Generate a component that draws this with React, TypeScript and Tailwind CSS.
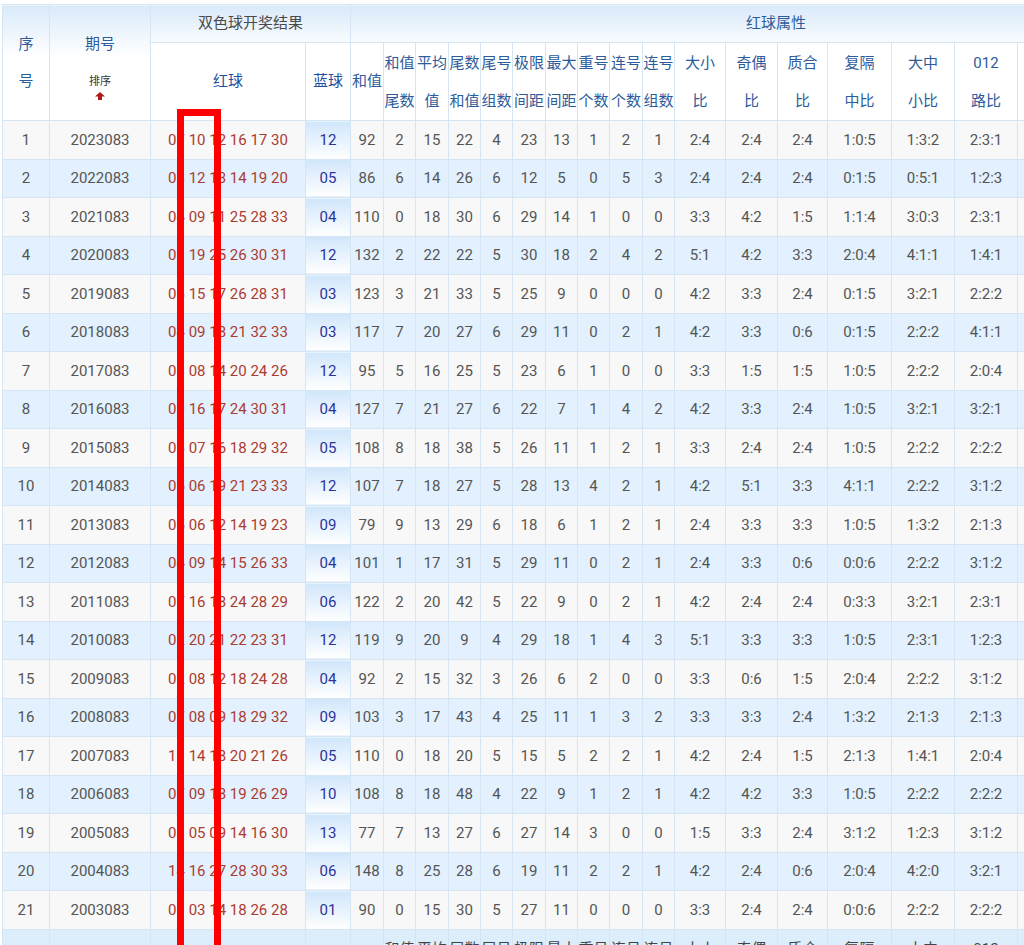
import React from "react";

// 双色球 历史同期 红球属性表
const draws = [
  { q: "2023083", red: "07 10 12 16 17 30", blue: "12", s: [92, 2, 15, 22, 4, 23, 13, 1, 2, 1], r: ["2:4", "2:4", "2:4", "1:0:5", "1:3:2", "2:3:1"] },
  { q: "2022083", red: "08 12 13 14 19 20", blue: "05", s: [86, 6, 14, 26, 6, 12, 5, 0, 5, 3], r: ["2:4", "2:4", "2:4", "0:1:5", "0:5:1", "1:2:3"] },
  { q: "2021083", red: "04 09 11 25 28 33", blue: "04", s: [110, 0, 18, 30, 6, 29, 14, 1, 0, 0], r: ["3:3", "4:2", "1:5", "1:1:4", "3:0:3", "2:3:1"] },
  { q: "2020083", red: "01 19 25 26 30 31", blue: "12", s: [132, 2, 22, 22, 5, 30, 18, 2, 4, 2], r: ["5:1", "4:2", "3:3", "2:0:4", "4:1:1", "1:4:1"] },
  { q: "2019083", red: "06 15 17 26 28 31", blue: "03", s: [123, 3, 21, 33, 5, 25, 9, 0, 0, 0], r: ["4:2", "3:3", "2:4", "0:1:5", "3:2:1", "2:2:2"] },
  { q: "2018083", red: "04 09 18 21 32 33", blue: "03", s: [117, 7, 20, 27, 6, 29, 11, 0, 2, 1], r: ["4:2", "3:3", "0:6", "0:1:5", "2:2:2", "4:1:1"] },
  { q: "2017083", red: "03 08 14 20 24 26", blue: "12", s: [95, 5, 16, 25, 5, 23, 6, 1, 0, 0], r: ["3:3", "1:5", "1:5", "1:0:5", "2:2:2", "2:0:4"] },
  { q: "2016083", red: "09 16 17 24 30 31", blue: "04", s: [127, 7, 21, 27, 6, 22, 7, 1, 4, 2], r: ["4:2", "3:3", "2:4", "1:0:5", "3:2:1", "3:2:1"] },
  { q: "2015083", red: "06 07 16 18 29 32", blue: "05", s: [108, 8, 18, 38, 5, 26, 11, 1, 2, 1], r: ["3:3", "2:4", "2:4", "1:0:5", "2:2:2", "2:2:2"] },
  { q: "2014083", red: "05 06 19 21 23 33", blue: "12", s: [107, 7, 18, 27, 5, 28, 13, 4, 2, 1], r: ["4:2", "5:1", "3:3", "4:1:1", "2:2:2", "3:1:2"] },
  { q: "2013083", red: "05 06 12 14 19 23", blue: "09", s: [79, 9, 13, 29, 6, 18, 6, 1, 2, 1], r: ["2:4", "3:3", "3:3", "1:0:5", "1:3:2", "2:1:3"] },
  { q: "2012083", red: "04 09 14 15 26 33", blue: "04", s: [101, 1, 17, 31, 5, 29, 11, 0, 2, 1], r: ["2:4", "3:3", "0:6", "0:0:6", "2:2:2", "3:1:2"] },
  { q: "2011083", red: "07 16 18 24 28 29", blue: "06", s: [122, 2, 20, 42, 5, 22, 9, 0, 2, 1], r: ["4:2", "2:4", "2:4", "0:3:3", "3:2:1", "2:3:1"] },
  { q: "2010083", red: "02 20 21 22 23 31", blue: "12", s: [119, 9, 20, 9, 4, 29, 18, 1, 4, 3], r: ["5:1", "3:3", "3:3", "1:0:5", "2:3:1", "1:2:3"] },
  { q: "2009083", red: "02 08 12 18 24 28", blue: "04", s: [92, 2, 15, 32, 3, 26, 6, 2, 0, 0], r: ["3:3", "0:6", "1:5", "2:0:4", "2:2:2", "3:1:2"] },
  { q: "2008083", red: "07 08 09 18 29 32", blue: "09", s: [103, 3, 17, 43, 4, 25, 11, 1, 3, 2], r: ["3:3", "3:3", "2:4", "1:3:2", "2:1:3", "2:1:3"] },
  { q: "2007083", red: "11 14 18 20 21 26", blue: "05", s: [110, 0, 18, 20, 5, 15, 5, 2, 2, 1], r: ["4:2", "2:4", "1:5", "2:1:3", "1:4:1", "2:0:4"] },
  { q: "2006083", red: "07 09 18 19 26 29", blue: "10", s: [108, 8, 18, 48, 4, 22, 9, 1, 2, 1], r: ["4:2", "4:2", "3:3", "1:0:5", "2:2:2", "2:2:2"] },
  { q: "2005083", red: "03 05 09 14 16 30", blue: "13", s: [77, 7, 13, 27, 6, 27, 14, 3, 0, 0], r: ["1:5", "3:3", "2:4", "3:1:2", "1:2:3", "3:1:2"] },
  { q: "2004083", red: "14 16 27 28 30 33", blue: "06", s: [148, 8, 25, 28, 6, 19, 11, 2, 2, 1], r: ["4:2", "2:4", "0:6", "2:0:4", "4:2:0", "3:2:1"] },
  { q: "2003083", red: "01 03 14 18 26 28", blue: "01", s: [90, 0, 15, 30, 5, 27, 11, 0, 0, 0], r: ["3:3", "2:4", "2:4", "0:0:6", "2:2:2", "2:2:2"] },
];

const statHeads: [string, string][] = [
  ["和值", "尾数"],
  ["平均", "值"],
  ["尾数", "和值"],
  ["尾号", "组数"],
  ["极限", "间距"],
  ["最大", "间距"],
  ["重号", "个数"],
  ["连号", "个数"],
  ["连号", "组数"],
  ["大小", "比"],
  ["奇偶", "比"],
  ["质合", "比"],
  ["复隔", "中比"],
  ["大中", "小比"],
  ["012", "路比"],
];

// columns past the right edge of the view
const extraCols = 3;

const colWidths = [
  "w-[47px]", "w-[101px]", "w-[155px]", "w-[45px]",
  "w-[33px]", "w-[32px]", "w-[33px]", "w-[32px]", "w-[32px]", "w-[33px]",
  "w-[32px]", "w-[32px]", "w-[33px]", "w-[32px]",
  "w-[51px]", "w-[52px]", "w-[50px]", "w-[64px]", "w-[63px]", "w-[63px]",
  "w-[63px]", "w-[63px]", "w-[57px]",
];

const cell = "border border-[#d5e5f3] p-0 text-center align-middle whitespace-nowrap";

function UpArrow() {
  return (
    <svg width="10" height="8" viewBox="0 0 10 8" className="mx-auto mt-[4px] block">
      <polygon points="5,0 10,4.5 7,4.5 7,8 3,8 3,4.5 0,4.5" fill="#b01c1c" />
    </svg>
  );
}

function TwoLine({ a, b }: { a: string; b: string }) {
  return (
    <div className="leading-[38px]">
      {a}
      <br />
      {b}
    </div>
  );
}

export default function App() {
  const blanks = Array.from({ length: extraCols });
  return (
    <div className="relative h-[945px] w-[1024px] overflow-hidden bg-white font-[Roboto,'Noto_Sans_CJK_SC',sans-serif] text-[15px]">
      <div className="pl-[2px] pt-[4px]">
        <table className="w-[1198px] table-fixed border-collapse">
          <colgroup>
            {colWidths.map((w, i) => (
              <col key={i} className={w} />
            ))}
          </colgroup>
          <thead>
            <tr className="h-[38px]">
              <th
                rowSpan={2}
                className={`${cell} bg-[linear-gradient(to_bottom,#d9eaf9,#ffffff_45%)] font-normal text-[#2d5c9c]`}
              >
                <div className="leading-[37px]">
                  序<br />号
                </div>
              </th>
              <th
                rowSpan={2}
                className={`${cell} bg-[linear-gradient(to_bottom,#d9eaf9,#ffffff_45%)] font-normal text-[#2d5c9c]`}
              >
                <div className="leading-[37px]">期号</div>
                <div className="mt-[12px] text-[11px] leading-[13px] text-[#333]">排序</div>
                <UpArrow />
              </th>
              <th
                colSpan={2}
                className={`${cell} bg-gradient-to-b from-[#d9eaf9] to-[#f8fbfe] font-normal text-[#4a4a4a]`}
              >
                双色球开奖结果
              </th>
              <th
                colSpan={16 + extraCols}
                className={`${cell} bg-gradient-to-b from-[#d9eaf9] to-[#f8fbfe] text-left font-normal text-[#2d5c9c]`}
              >
                <span className="inline-block w-[850px] text-center">红球属性</span>
              </th>
            </tr>
            <tr className="h-[78px]">
              <th className={`${cell} bg-white font-normal text-[#1f4f9f]`}>红球</th>
              <th className={`${cell} bg-white font-normal text-[#1f4f9f]`}>蓝球</th>
              <th className={`${cell} bg-white font-normal text-[#2d5c9c]`}>和值</th>
              {statHeads.map(([a, b], i) => (
                <th key={i} className={`${cell} bg-white font-normal text-[#2d5c9c]`}>
                  <TwoLine a={a} b={b} />
                </th>
              ))}
              {blanks.map((_, i) => (
                <th key={`x${i}`} className={`${cell} bg-white`} />
              ))}
            </tr>
          </thead>
          <tbody>
            {draws.map((d, i) => {
              const even = i % 2 === 1;
              const bg = even ? "bg-[#e2f1fd]" : "bg-[#f8f8f8]";
              return (
                <tr key={d.q} className="h-[38.5px] text-[#555]">
                  <td className={`${cell} ${bg}`}>{i + 1}</td>
                  <td className={`${cell} ${bg}`}>{d.q}</td>
                  <td className={`${cell} ${bg} text-[#ab3c32]`}>{d.red}</td>
                  <td className={`${cell} bg-gradient-to-b from-[#d0e6fb] to-white text-[#2b339c]`}>{d.blue}</td>
                  {d.s.map((v, j) => (
                    <td key={j} className={`${cell} ${bg}`}>
                      {v}
                    </td>
                  ))}
                  {d.r.map((v, j) => (
                    <td key={`r${j}`} className={`${cell} ${bg}`}>
                      {v}
                    </td>
                  ))}
                  {blanks.map((_, j) => (
                    <td key={`x${j}`} className={`${cell} ${bg}`} />
                  ))}
                </tr>
              );
            })}
          </tbody>
          <tfoot>
            <tr className="h-[78px] text-[#444]">
              <td className={`${cell} bg-[#dcedfb]`} />
              <td className={`${cell} bg-[#dcedfb]`} />
              <td className={`${cell} bg-[#dcedfb]`}>红球</td>
              <td className={`${cell} bg-[#dcedfb]`}>蓝球</td>
              <td className={`${cell} bg-[#dcedfb]`}>和值</td>
              {statHeads.map(([a, b], i) => (
                <td key={i} className={`${cell} bg-[#dcedfb]`}>
                  <TwoLine a={a} b={b} />
                </td>
              ))}
              {blanks.map((_, i) => (
                <td key={`x${i}`} className={`${cell} bg-[#dcedfb]`} />
              ))}
            </tr>
          </tfoot>
        </table>
      </div>

      {/* annotation box */}
      <div className="absolute left-[177px] top-[109px] h-[900px] w-[44px] border-[7px] border-[#ff0000]" />
    </div>
  );
}
